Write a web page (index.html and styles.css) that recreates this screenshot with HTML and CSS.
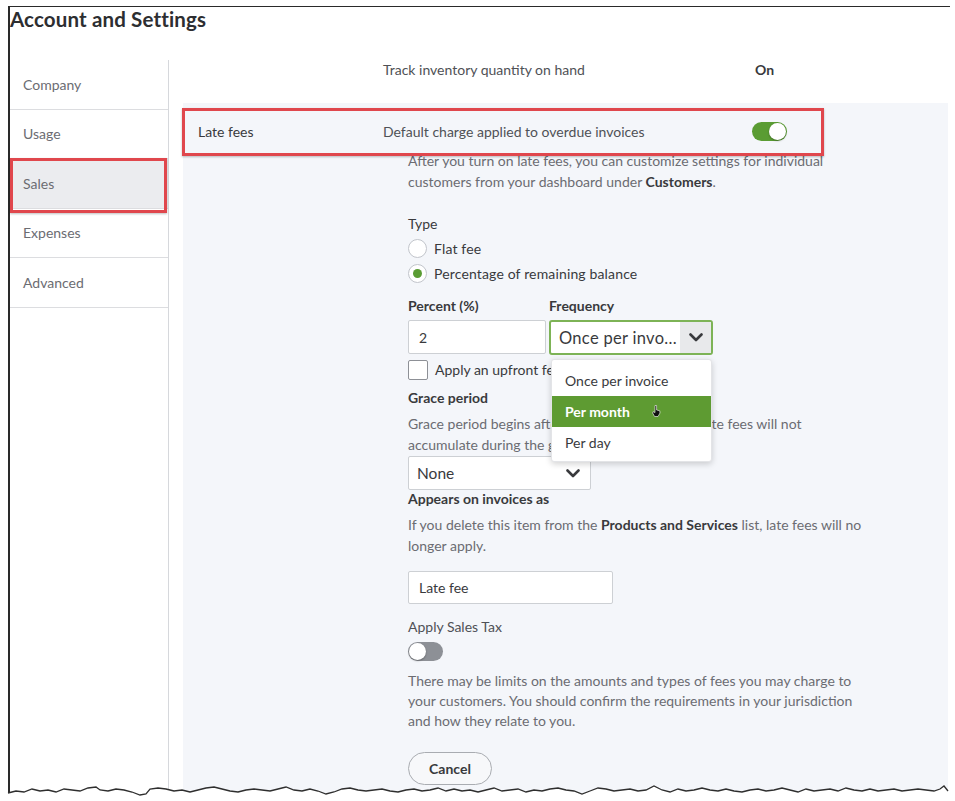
FILE: index.html
```html
<!DOCTYPE html>
<html>
<head>
<meta charset="utf-8">
<title>Account and Settings</title>
<link rel="stylesheet" href="styles.css">
</head>
<body>
<div class="frame">
  <h1 class="title">Account and Settings</h1>
  <div class="layout">
    <nav class="sidebar">
      <div class="nav-item">Company</div>
      <div class="nav-item">Usage</div>
      <div class="nav-item active">Sales</div>
      <div class="nav-item">Expenses</div>
      <div class="nav-item">Advanced</div>
    </nav>
    <main class="main">
      <div class="track-row">
        <div class="row-label"></div>
        <div class="row-desc">Track inventory quantity on hand</div>
        <div class="row-value">On</div>
      </div>
      <section class="panel">
        <div class="late-row">
          <div class="row-label">Late fees</div>
          <div class="row-desc">Default charge applied to overdue invoices</div>
          <div class="toggle on"><span class="knob"></span></div>
        </div>
        <div class="late-body">
          <p class="desc">After you turn on late fees, you can customize settings for individual<br>customers from your dashboard under <b>Customers</b>.</p>
          <div class="plain-label type-label">Type</div>
          <div class="radio-row first"><span class="radio"></span><span>Flat fee</span></div>
          <div class="radio-row"><span class="radio checked"></span><span>Percentage of remaining balance</span></div>
          <div class="fields">
            <div class="field percent">
              <div class="field-label">Percent (%)</div>
              <div class="input">2</div>
            </div>
            <div class="field freq">
              <div class="field-label">Frequency</div>
              <div class="select focus">
                <span class="select-text freq-text">Once per invo...</span>
                <span class="chev-box"><svg width="14" height="9" viewBox="0 0 14 9"><path d="M1.5 1.5 L7 7 L12.5 1.5" fill="none" stroke="#393a3d" stroke-width="2.6" stroke-linecap="round" stroke-linejoin="round"/></svg></span>
              </div>
              <ul class="menu">
                <li class="menu-item">Once per invoice</li>
                <li class="menu-item selected">Per month<svg class="cursor" width="9" height="12" viewBox="0 0 9 12"><path d="M3 0.5 L4.6 0.5 L4.6 5 L7.8 5.8 L8 8 L6 11.5 L2.6 11.5 L0.6 8 L1.2 6.6 L3 7.6 Z" fill="#111" stroke="#fff" stroke-width="0.6"/></svg></li>
                <li class="menu-item">Per day</li>
              </ul>
            </div>
          </div>
          <div class="check-row"><span class="checkbox"></span><span>Apply an upfront fee</span></div>
          <div class="field-label grace-label">Grace period</div>
          <p class="desc grace-desc">Grace period begins after the invoice due date. Late fees will not<br>accumulate during the grace period.</p>
          <div class="select grace-select">
            <span class="select-text">None</span>
            <span class="chev-plain"><svg width="14" height="9" viewBox="0 0 14 9"><path d="M1.5 1.5 L7 7 L12.5 1.5" fill="none" stroke="#393a3d" stroke-width="2.6" stroke-linecap="round" stroke-linejoin="round"/></svg></span>
          </div>
          <div class="field-label appears-label">Appears on invoices as</div>
          <p class="desc delete-desc">If you delete this item from the <b>Products and Services</b> list, late fees will no<br>longer apply.</p>
          <div class="input latefee-input">Late fee</div>
          <div class="plain-label tax-label">Apply Sales Tax</div>
          <div class="toggle off"><span class="knob"></span></div>
          <p class="desc limits-desc">There may be limits on the amounts and types of fees you may charge to<br>your customers. You should confirm the requirements in your jurisdiction<br>and how they relate to you.</p>
          <button class="cancel-btn" type="button">Cancel</button>
        </div>
      </section>
    </main>
  </div>
</div>
<svg class="tear" width="955" height="801" viewBox="0 0 955 801">
  <path class="tear-fill" d="M0 793 L8 793 L16 791 L24 792 L32 789 L40 791 L48 790 L56 792 L64 789 L72 790 L80 791 L88 788 L96 787 L100 790 L108 791 L116 789 L124 790 L132 792 L140 795 L146 794 L150 789 L158 788 L166 789 L174 791 L182 790 L190 792 L198 790 L206 788 L214 787 L222 789 L230 791 L238 792 L246 790 L254 789 L262 790 L270 791 L278 789 L286 787 L294 790 L302 791 L310 789 L318 791 L326 794 L334 792 L342 789 L350 788 L358 790 L366 791 L374 790 L382 789 L390 791 L398 792 L406 790 L414 789 L422 791 L430 790 L438 788 L446 791 L454 789 L462 791 L470 790 L478 792 L486 790 L494 788 L502 791 L510 790 L518 789 L526 792 L534 790 L542 791 L550 789 L558 788 L566 790 L574 791 L582 794 L590 791 L598 788 L606 789 L614 791 L622 790 L630 789 L638 791 L646 790 L654 786 L662 790 L670 792 L678 789 L686 791 L694 790 L702 788 L710 790 L718 791 L726 789 L734 791 L742 792 L750 790 L758 789 L766 791 L774 790 L782 788 L790 790 L798 792 L806 789 L814 791 L822 790 L830 789 L838 791 L846 788 L854 790 L862 791 L870 789 L878 791 L886 790 L894 789 L902 791 L910 790 L918 789 L926 790 L934 791 L940 789 L944 786 L948 791 L955 791 L955 801 L0 801 Z"/>
  <path class="tear-line" d="M8 793 L16 791 L24 792 L32 789 L40 791 L48 790 L56 792 L64 789 L72 790 L80 791 L88 788 L96 787 L100 790 L108 791 L116 789 L124 790 L132 792 L140 795 L146 794 L150 789 L158 788 L166 789 L174 791 L182 790 L190 792 L198 790 L206 788 L214 787 L222 789 L230 791 L238 792 L246 790 L254 789 L262 790 L270 791 L278 789 L286 787 L294 790 L302 791 L310 789 L318 791 L326 794 L334 792 L342 789 L350 788 L358 790 L366 791 L374 790 L382 789 L390 791 L398 792 L406 790 L414 789 L422 791 L430 790 L438 788 L446 791 L454 789 L462 791 L470 790 L478 792 L486 790 L494 788 L502 791 L510 790 L518 789 L526 792 L534 790 L542 791 L550 789 L558 788 L566 790 L574 791 L582 794 L590 791 L598 788 L606 789 L614 791 L622 790 L630 789 L638 791 L646 790 L654 786 L662 790 L670 792 L678 789 L686 791 L694 790 L702 788 L710 790 L718 791 L726 789 L734 791 L742 792 L750 790 L758 789 L766 791 L774 790 L782 788 L790 790 L798 792 L806 789 L814 791 L822 790 L830 789 L838 791 L846 788 L854 790 L862 791 L870 789 L878 791 L886 790 L894 789 L902 791 L910 790 L918 789 L926 790 L934 791 L940 789 L944 786 L948 791"/>
</svg>
</body>
</html>
```
FILE: styles.css
```css
html, body {
  margin: 0;
  padding: 0;
  height: 801px;
  overflow: hidden;
  background: #ffffff;
}
body {
  position: relative;
  font-family: Lato, "Open Sans", "Liberation Sans", sans-serif;
  font-size: 14px;
  color: #393a3d;
}
.frame {
  margin: 6px 0 0 8px;
  width: 942px;
  height: 795px;
  box-sizing: border-box;
  border-top: 1px solid #2a2a2a;
  border-left: 2px solid #2a2a2a;
  display: flex;
  flex-direction: column;
}
.title {
  margin: 0;
  height: 33px;
  font-size: 20.5px;
  line-height: 24px;
  font-weight: 700;
  color: #2d2e31;
  letter-spacing: 0.15px;
}
.layout {
  display: flex;
  flex: 1;
}
.sidebar {
  width: 158px;
  margin-top: 20px;
  border-right: 1px solid #d6d8dc;
}
.nav-item {
  height: 48.5px;
  border-bottom: 1px solid #dcdde0;
  padding-left: 13px;
  display: flex;
  align-items: center;
  font-size: 14px;
  color: #6b6c72;
  position: relative;
}
.nav-item.active {
  background: #ebecef;
}
.nav-item.active::after {
  content: "";
  position: absolute;
  left: 0;
  right: 1px;
  top: -1px;
  bottom: -5px;
  border: 3px solid #e0474d;
  box-shadow: 0 1px 2px rgba(0, 0, 0, 0.25);
}
.main {
  flex: 1;
  margin-left: 14px;
  margin-right: 2px;
  display: flex;
  flex-direction: column;
}
.track-row {
  height: 58px;
  padding: 0 0 5px 15px;
  display: grid;
  grid-template-columns: 185px 372px auto;
  align-items: center;
}
.row-desc {
  color: #4f5156;
}
.row-value {
  font-weight: 700;
  color: #393a3d;
}
.panel {
  flex: 1;
  background: #f4f6fa;
  padding-top: 9px;
}
.late-row {
  position: relative;
  width: 641px;
  height: 38px;
  box-sizing: border-box;
  padding-left: 15px;
  display: grid;
  grid-template-columns: 185px 369px 35px;
  align-items: center;
}
.late-row::after {
  content: "";
  position: absolute;
  left: -1px;
  right: 0;
  top: -4px;
  bottom: -6px;
  border: 3px solid #e0474d;
  box-shadow: 0 1px 2px rgba(0, 0, 0, 0.25);
}
.late-row .row-label {
  color: #393a3d;
}
.toggle {
  width: 35px;
  height: 19px;
  box-sizing: border-box;
  border-radius: 10px;
  padding: 1px;
  display: flex;
  align-items: center;
}
.toggle.on {
  background: #5a9c33;
  justify-content: flex-end;
}
.toggle.off {
  background: #8d9096;
  justify-content: flex-start;
  margin-top: 5px;
}
.knob {
  width: 17px;
  height: 17px;
  border-radius: 50%;
  background: #ffffff;
  box-shadow: 0 1px 2px rgba(0, 0, 0, 0.3);
}
.late-body {
  padding-left: 225px;
  display: flex;
  flex-direction: column;
  align-items: flex-start;
}
.desc {
  margin: 0;
  line-height: 21px;
  color: #6b6c72;
  white-space: nowrap;
}
.desc b {
  color: #393a3d;
  font-weight: 700;
}
.plain-label {
  line-height: 21px;
  color: #393a3d;
}
.type-label {
  margin-top: 21px;
}
.radio-row {
  height: 25px;
  display: flex;
  align-items: center;
  gap: 7px;
  color: #393a3d;
  letter-spacing: 0.15px;
}
.radio-row.first {
  margin-top: 2px;
}
.radio {
  width: 19px;
  height: 19px;
  box-sizing: border-box;
  border-radius: 50%;
  border: 1px solid #c2c5cb;
  background: #ffffff;
  display: flex;
  align-items: center;
  justify-content: center;
}
.radio.checked::before {
  content: "";
  width: 9px;
  height: 9px;
  border-radius: 50%;
  background: #5a9c33;
}
.fields {
  margin-top: 9px;
  display: flex;
  gap: 3px;
}
.field {
  display: flex;
  flex-direction: column;
}
.freq {
  position: relative;
}
.field-label {
  line-height: 21px;
  font-weight: 700;
  color: #393a3d;
}
.input {
  margin-top: 4px;
  height: 34px;
  box-sizing: border-box;
  border: 1px solid #cdd0d4;
  border-radius: 2px;
  background: #ffffff;
  padding-left: 10px;
  display: flex;
  align-items: center;
  color: #393a3d;
}
.percent .input {
  width: 138px;
}
.select {
  height: 34px;
  box-sizing: border-box;
  border: 1px solid #cdd0d4;
  border-radius: 2px;
  background: #ffffff;
  display: flex;
  align-items: center;
}
.select.focus {
  margin-top: 4px;
  width: 164px;
  height: 35px;
  border: 2px solid #7db356;
  border-radius: 3px;
}
.select-text {
  flex: 1;
  padding-left: 8px;
  font-size: 15.5px;
  color: #393a3d;
  white-space: nowrap;
}
.freq-text {
  font-size: 16.5px;
  letter-spacing: 0.3px;
}
.chev-box {
  width: 31px;
  align-self: stretch;
  background: #e8e9eb;
  display: flex;
  align-items: center;
  justify-content: center;
}
.menu {
  position: absolute;
  left: 2px;
  top: 64px;
  width: 161px;
  margin: 0;
  padding: 5px 0 3px;
  list-style: none;
  background: #ffffff;
  border: 1px solid #e3e4e7;
  border-radius: 3px;
  box-shadow: 0 2px 6px rgba(0, 0, 0, 0.18);
  box-sizing: border-box;
  z-index: 2;
}
.menu-item {
  height: 31px;
  padding-left: 13px;
  display: flex;
  align-items: center;
  color: #393a3d;
}
.menu-item.selected {
  background: #5e9b32;
  color: #ffffff;
  font-weight: 700;
}
.cursor {
  margin-left: 22px;
  margin-top: -2px;
}
.check-row {
  margin-top: 4px;
  height: 21px;
  display: flex;
  align-items: center;
  gap: 7px;
  color: #393a3d;
}
.checkbox {
  width: 20px;
  height: 20px;
  box-sizing: border-box;
  border: 1px solid #8d9096;
  border-radius: 2px;
  background: #ffffff;
}
.grace-label {
  margin-top: 7px;
}
.grace-desc {
  margin-top: 5px;
}
.grace-select {
  margin-top: 1px;
  width: 183px;
}
.chev-plain {
  width: 34px;
  display: flex;
  justify-content: center;
}
.appears-label {
  line-height: 18px;
}
.delete-desc {
  margin-top: 6px;
}
.latefee-input {
  margin-top: 15px;
  width: 205px;
  height: 33px;
}
.tax-label {
  margin-top: 12px;
  color: #4f5156;
}
.limits-desc {
  margin-top: 10px;
  line-height: 20px;
}
.cancel-btn {
  margin-top: 21px;
  width: 84px;
  height: 33px;
  border: 1px solid #a9acb1;
  border-radius: 17px;
  background: #f7f8fa;
  font-family: inherit;
  font-size: 14px;
  font-weight: 700;
  color: #393a3d;
  padding: 0;
}
.tear {
  position: absolute;
  left: 0;
  top: 0;
  pointer-events: none;
}
.tear-fill {
  fill: #ffffff;
}
.tear-line {
  fill: none;
  stroke: #2e2e2e;
  stroke-width: 1.3;
}
```
